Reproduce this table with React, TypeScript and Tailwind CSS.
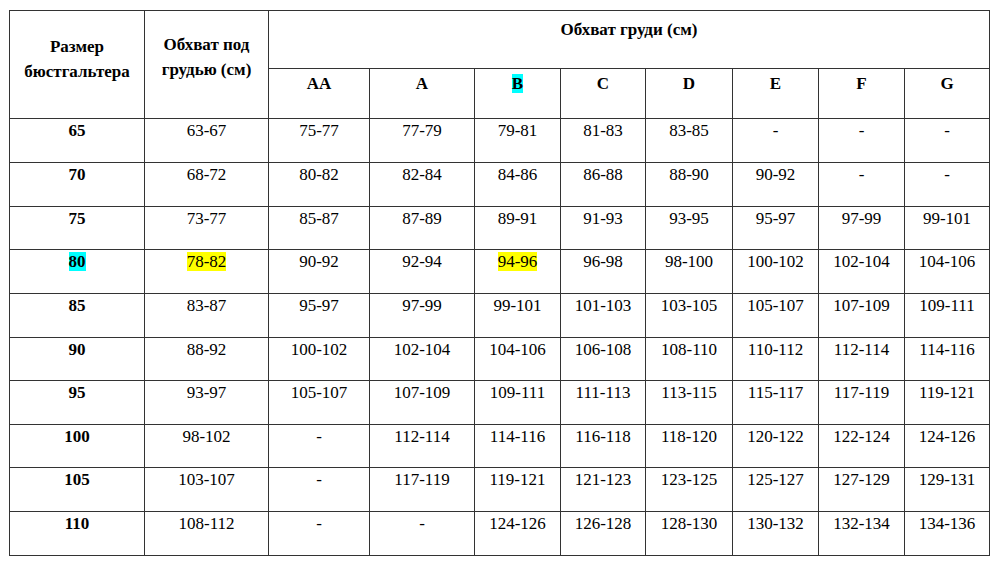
import React from 'react';

const cups = ['AA', 'A', 'B', 'C', 'D', 'E', 'F', 'G'];

const rows: [string, string, string[]][] = [
  ['65', '63-67', ['75-77', '77-79', '79-81', '81-83', '83-85', '-', '-', '-']],
  ['70', '68-72', ['80-82', '82-84', '84-86', '86-88', '88-90', '90-92', '-', '-']],
  ['75', '73-77', ['85-87', '87-89', '89-91', '91-93', '93-95', '95-97', '97-99', '99-101']],
  ['80', '78-82', ['90-92', '92-94', '94-96', '96-98', '98-100', '100-102', '102-104', '104-106']],
  ['85', '83-87', ['95-97', '97-99', '99-101', '101-103', '103-105', '105-107', '107-109', '109-111']],
  ['90', '88-92', ['100-102', '102-104', '104-106', '106-108', '108-110', '110-112', '112-114', '114-116']],
  ['95', '93-97', ['105-107', '107-109', '109-111', '111-113', '113-115', '115-117', '117-119', '119-121']],
  ['100', '98-102', ['-', '112-114', '114-116', '116-118', '118-120', '120-122', '122-124', '124-126']],
  ['105', '103-107', ['-', '117-119', '119-121', '121-123', '123-125', '125-127', '127-129', '129-131']],
  ['110', '108-112', ['-', '-', '124-126', '126-128', '128-130', '130-132', '132-134', '134-136']],
];

const rowHeights = ['h-[44px]', 'h-[44px]', 'h-[43px]', 'h-[44px]', 'h-[44px]', 'h-[43px]', 'h-[44px]', 'h-[43px]', 'h-[44px]', 'h-[44px]'];

const face = "font-['Liberation_Serif','DejaVu_Serif','Times_New_Roman',serif] text-[17px]";
const head = `border border-[#333] align-top text-center font-bold ${face}`;
const cell = `border border-[#333] align-top text-center pt-[2px] px-1 leading-[20px] ${face}`;

const App: React.FC = () => {
  return (
    <div className={`w-[1000px] h-[564px] bg-white pt-[10px] pl-[9px] text-black ${face}`}>
      <table className="table-fixed border-collapse w-[980px]">
        <colgroup>
          <col className="w-[135px]" />
          <col className="w-[124px]" />
          <col className="w-[101px]" />
          <col className="w-[105px]" />
          <col className="w-[86px]" />
          <col className="w-[85px]" />
          <col className="w-[87px]" />
          <col className="w-[86px]" />
          <col className="w-[86px]" />
          <col className="w-[85px]" />
        </colgroup>
        <thead>
          <tr className="h-[58px]">
            <th rowSpan={2} className={`${head} pt-[23px] leading-[25px]`}>
              Размер<br />бюстгальтера
            </th>
            <th rowSpan={2} className={`${head} pt-[21px] leading-[25px]`}>
              Обхват под<br />грудью (см)
            </th>
            <th colSpan={8} className={`${head} pt-[9px] leading-[20px]`}>
              Обхват груди (см)
            </th>
          </tr>
          <tr className="h-[50px]">
            {cups.map((c) => (
              <th key={c} className={`${head} pt-[5px] leading-[20px]`}>
                {c === 'B' ? <span className="bg-[#00ffff]">{c}</span> : c}
              </th>
            ))}
          </tr>
        </thead>
        <tbody>
          {rows.map(([size, under, vals], i) => {
            const hl = size === '80';
            return (
              <tr key={size} className={rowHeights[i]}>
                <td className={`${cell} font-bold`}>
                  {hl ? <span className="bg-[#00ffff]">{size}</span> : size}
                </td>
                <td className={cell}>
                  {hl ? <span className="bg-[#ffff00]">{under}</span> : under}
                </td>
                {vals.map((v, j) => (
                  <td key={j} className={cell}>
                    {hl && j === 2 ? <span className="bg-[#ffff00]">{v}</span> : v}
                  </td>
                ))}
              </tr>
            );
          })}
        </tbody>
      </table>
    </div>
  );
};

export default App;
